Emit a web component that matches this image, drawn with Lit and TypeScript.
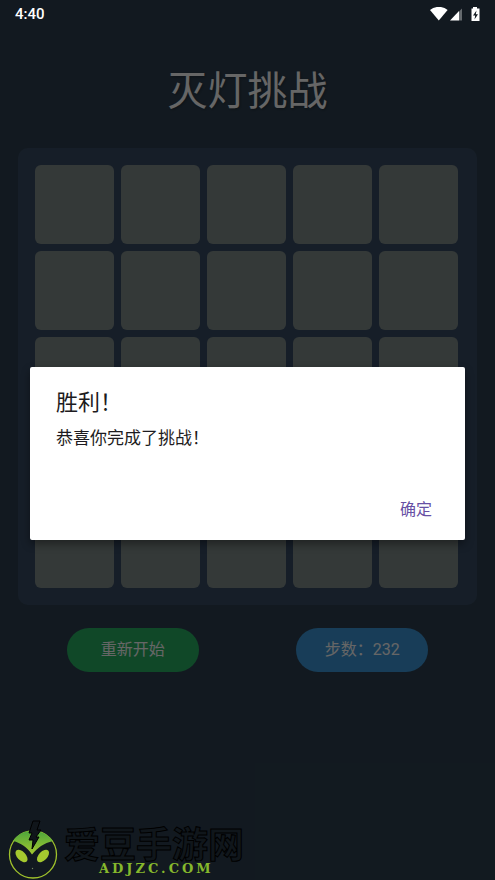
import { LitElement, html, css, svg } from "lit";
import { customElement, state } from "lit/decorators.js";

const statusIcons = svg`
  <path d="M0 3C5-1.200 12.800-1.200 17.600 3L8.800 13.500Z" fill="#fff"/>
  <path d="M32 1.500V13.500h-3V4.500Z" fill="#fff" opacity=".35"/>
  <path d="M20 13.500 29 4V13.500Z" fill="#fff"/>
  <path d="M43 0h4v1.500h2.500v12.500h-8V1.500H43Z" fill="#fff"/>
  <path d="M46.500 3.500 43 8.500h2.200l-.7 4 3.500-5.300h-2.200Z" fill="#121920"/>
`;

@customElement("app-root")
export class AppRoot extends LitElement {
  @state() private steps = 232;
  @state() private lights: boolean[] = Array(25).fill(false);
  @state() private won = true;

  static styles = css`
    :host {
      display: flex;
      flex-direction: column;
      position: relative;
      min-height: 100vh;
      box-sizing: border-box;
      background: #2e4051;
      color: #fff;
      font-family: Roboto, "Noto Sans CJK SC", sans-serif;
      font-size: 16px;
    }
    * { box-sizing: border-box; }
    button { font: inherit; border: 0; cursor: pointer; }
    .status {
      display: flex;
      justify-content: space-between;
      align-items: center;
      height: 27px;
      padding: 0 15px;
      font-size: 15px;
      font-weight: 500;
      position: relative;
      z-index: 2;
    }
    .status svg { display: block; width: 50px; height: 14px; }
    h1 {
      margin: 34px 0 26px;
      font-size: 40px;
      font-weight: 400;
      line-height: 61px;
      text-align: center;
      text-shadow: 1px 1px 3px rgba(0, 0, 0, 0.3);
    }
    .board {
      display: grid;
      grid-template-columns: repeat(5, 1fr);
      gap: 7px;
      margin: 0 18px;
      padding: 17px 19px 17px 17px;
      border-radius: 10px;
      background: #394d64;
    }
    .cell {
      aspect-ratio: 1;
      padding: 0;
      border-radius: 6px;
      background: #828e8c;
    }
    .cell.lit { background: #f1c40f; }
    .actions {
      display: flex;
      justify-content: space-around;
      margin: 23px 18px 0;
    }
    .pill {
      display: grid;
      place-items: center;
      width: 132px;
      height: 44px;
      border-radius: 22px;
      padding: 0;
      color: #fff;
      line-height: 24px;
    }
    .restart { background: #29b465; }
    .steps { background: #3c99dc; }
    .scrim {
      position: absolute;
      inset: 0;
      z-index: 1;
      display: flex;
      align-items: center;
      padding: 27px 30px 0;
      background: rgba(0, 0, 0, 0.6);
    }
    .dialog {
      flex: 1;
      display: flex;
      flex-direction: column;
      padding: 18px 27px 12px 26px;
      border-radius: 2px;
      background: #fff;
      color: #1d1b20;
      box-shadow: 0 4px 8px rgba(0, 0, 0, 0.4);
    }
    h2 { margin: 0; font-size: 22px; font-weight: 400; line-height: 35px; }
    p { margin: 4px 0 40px; font-size: 17px; line-height: 28px; }
    .confirm {
      align-self: flex-end;
      padding: 0 6px;
      background: none;
      color: #6750a4;
      line-height: 36px;
    }
    .brand {
      position: absolute;
      left: 8px;
      bottom: 0;
      z-index: 2;
      display: flex;
      align-items: flex-end;
    }
    .brand svg { display: block; width: 50px; height: 60px; }
    .words { padding-left: 6px; }
    .name {
      font-family: "Noto Sans CJK SC", sans-serif;
      font-size: 36px;
      font-weight: 700;
      line-height: 36px;
      color: #10161b;
      -webkit-text-stroke: 1px #000;
    }
    .site {
      padding: 0 0 2px 35px;
      font-family: "DejaVu Serif", serif;
      font-size: 13px;
      font-weight: 700;
      line-height: 18px;
      letter-spacing: 3px;
      color: #86b82c;
    }
  `;

  private toggle(i: number) {
    const x = i % 5;
    const next = [...this.lights];
    const near = [i, i - 5, i + 5];
    if (x > 0) near.push(i - 1);
    if (x < 4) near.push(i + 1);
    for (const n of near) if (n >= 0 && n < 25) next[n] = !next[n];
    this.lights = next;
    this.steps++;
    this.won = next.every((on) => !on);
  }

  private restart() {
    this.lights = this.lights.map(() => Math.random() > 0.5);
    this.steps = 0;
    this.won = false;
  }

  render() {
    return html`
      <div class="status">
        <span>4:40</span>
        <svg viewBox="0 0 50 14" aria-hidden="true">${statusIcons}</svg>
      </div>
      <h1>灭灯挑战</h1>
      <div class="board">
        ${this.lights.map(
          (on, i) => html`<button
            class="cell ${on ? "lit" : ""}"
            aria-label="${i + 1}"
            @click=${() => this.toggle(i)}
          ></button>`
        )}
      </div>
      <div class="actions">
        <button class="pill restart" @click=${this.restart}>重新开始</button>
        <div class="pill steps">步数：${this.steps}</div>
      </div>
      ${this.won
        ? html`<div class="scrim">
            <div class="dialog" role="dialog" aria-modal="true" aria-labelledby="title">
              <h2 id="title">胜利！</h2>
              <p>恭喜你完成了挑战！</p>
              <button class="confirm" @click=${() => (this.won = false)}>确定</button>
            </div>
          </div>`
        : ""}
      <div class="brand">
        <svg viewBox="0 0 50 60" aria-hidden="true">
          <defs>
            <linearGradient id="g" x1="0" y1="0" x2="0" y2="1">
              <stop offset="0" stop-color="#4ca43c" />
              <stop offset="1" stop-color="#a5c92f" />
            </linearGradient>
          </defs>
          <circle cx="25" cy="34.500" r="23.500" fill="none" stroke="#a0c22c" stroke-width="1.300" />
          <path d="M5 21C13 8 35 7 45 21 36 23 29 28 24 34.500 19 27 13 23 5 21Z" fill="url(#g)" />
          <ellipse cx="13.500" cy="36" rx="7.500" ry="4.300" transform="rotate(46 13.500 36)" fill="#a5c92f" />
          <ellipse cx="35" cy="36" rx="7.500" ry="4.300" transform="rotate(-46 35 36)" fill="#a5c92f" />
          <path d="M25 1h7l-3 9h4l-5 7h3l-7 12 1-9h-4l3-7h-3Z" fill="#10151a" stroke="#000" />
          <circle cx="24.500" cy="48.500" r=".7" fill="#71835e" />
        </svg>
        <div class="words">
          <div class="name">爱豆手游网</div>
          <div class="site">ADJZC.COM</div>
        </div>
      </div>
    `;
  }
}
